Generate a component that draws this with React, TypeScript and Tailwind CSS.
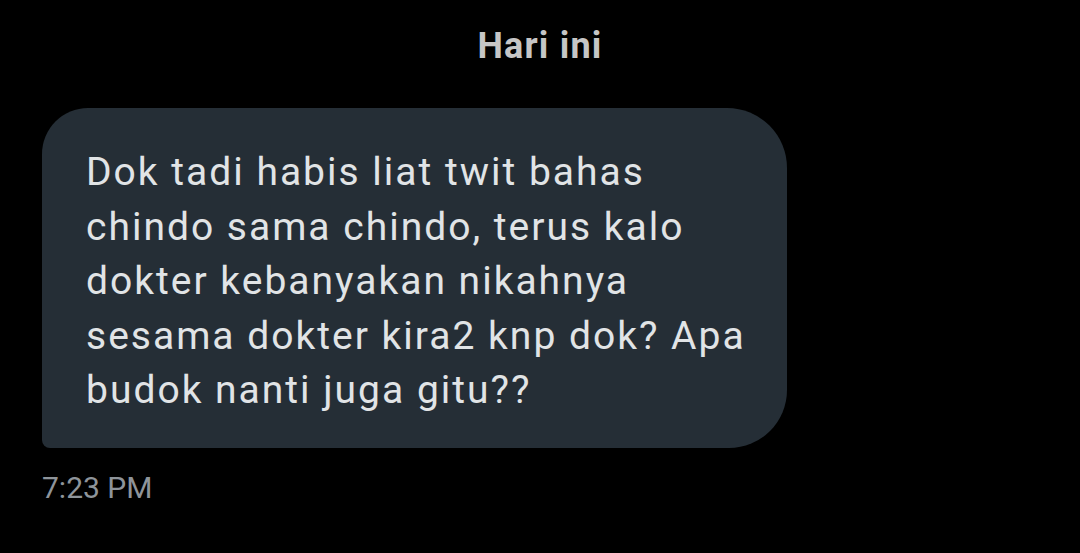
export default function App() {
  return (
    <div className="h-[553px] w-[1080px] overflow-hidden bg-black font-['Roboto',sans-serif]">
      <div className="pt-[26px] text-center text-[36px] font-bold leading-[40px] tracking-[1.2px] text-[#c6c6c6]">
        Hari ini
      </div>
      <div className="mt-[42px] pl-[42px]">
        <div className="w-[745px] rounded-tl-[46px] rounded-tr-[60px] rounded-br-[58px] rounded-bl-[8px] bg-[#252e36] pb-[30px] pl-[44px] pr-[30px] pt-[37px] text-[39px] leading-[54.6px] tracking-[2px] text-[#e1e4e6]">
          Dok tadi habis liat twit bahas chindo sama chindo, terus kalo dokter kebanyakan nikahnya sesama dokter
          kira2 knp dok? Apa budok nanti juga gitu??
        </div>
        <div className="mt-[22px] text-[30px] leading-[36px] text-[#8e949a]">7:23 PM</div>
      </div>
    </div>
  );
}
